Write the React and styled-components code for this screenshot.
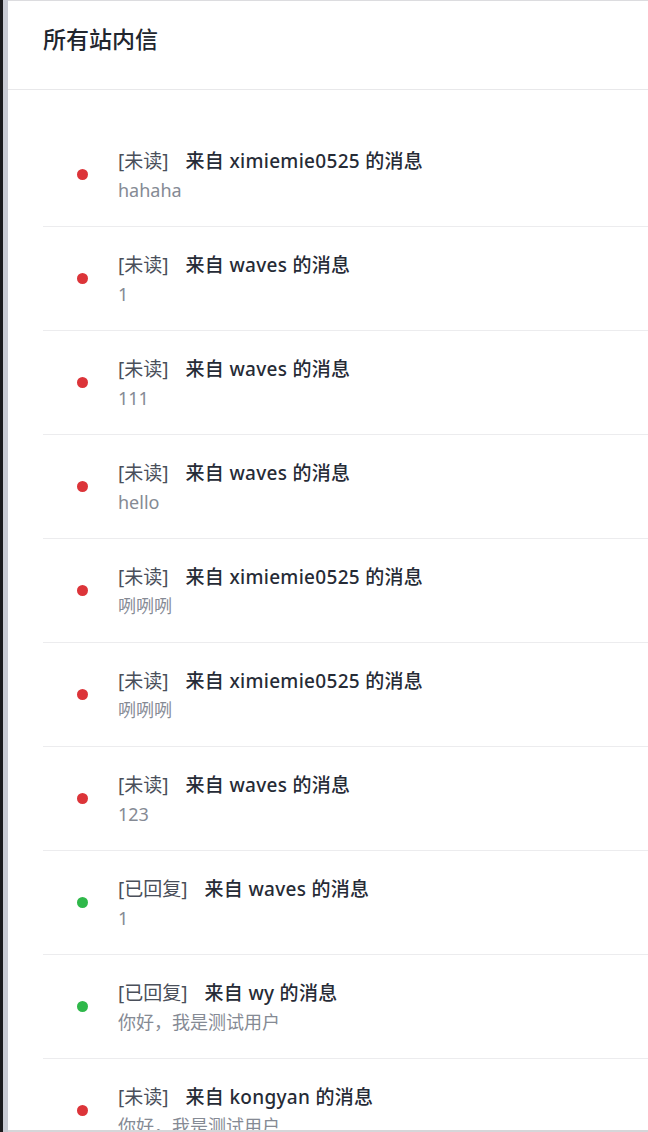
import React from 'react';
import styled, { createGlobalStyle } from 'styled-components';

const GlobalStyle = createGlobalStyle`
  html, body {
    margin: 0;
    padding: 0;
    height: 100%;
    background: #fff;
  }
  body {
    font-family: "Noto Sans", "Noto Sans CJK SC", sans-serif;
    overflow: hidden;
  }
`;

const Page = styled.div`
  display: flex;
  height: 100vh;
  overflow: hidden;
`;

// the dark edge of the window behind the drawer
const BackEdge = styled.div`
  width: 3px;
  flex-shrink: 0;
  background: #1b1b1d;
`;

const Shade = styled.div`
  width: 5px;
  flex-shrink: 0;
  background: #c9cbd3;
`;

const Drawer = styled.div`
  flex: 1;
  display: flex;
  flex-direction: column;
  background: #fff;
  border-top: 1px solid #dcdcdf;
  border-bottom: 2px solid #d6d6d9;
  overflow: hidden;
`;

const Header = styled.div`
  height: 89px;
  box-sizing: border-box;
  flex-shrink: 0;
  display: flex;
  align-items: center;
  padding: 0 35px 14px;
  border-bottom: 1px solid #e8e8ea;

  h2 {
    margin: 0;
    font-size: 23px;
    font-weight: 500;
    color: #22262e;
  }
`;

const List = styled.ul`
  list-style: none;
  margin: 0;
  padding: 33px 0 0 35px;
  overflow: hidden;
`;

const Item = styled.li`
  display: flex;
  align-items: center;
  height: 103px;
  padding-left: 34px;
  border-bottom: 1px solid #ececee;
`;

const Dot = styled.span`
  width: 11px;
  height: 11px;
  border-radius: 50%;
  flex-shrink: 0;
  margin: 0 30px 0 0;
  background: ${({ $replied }) => ($replied ? '#2fb84a' : '#dc3439')};
`;

const Body = styled.div`
  display: flex;
  flex-direction: column;
  margin-top: 2px;
`;

const Title = styled.div`
  font-size: 19px;
  line-height: 28px;
  letter-spacing: 0.3px;
  color: #262b36;
  font-weight: 500;

  .status {
    color: #4a4f5a;
    font-weight: 400;
    letter-spacing: 0;
    margin-right: 17px;
  }
`;

const Preview = styled.div`
  font-size: 18px;
  line-height: 28px;
  margin-top: 1px;
  color: #858a94;
`;

const messages = [
  { status: '未读', from: 'ximiemie0525', text: 'hahaha' },
  { status: '未读', from: 'waves', text: '1' },
  { status: '未读', from: 'waves', text: '111' },
  { status: '未读', from: 'waves', text: 'hello' },
  { status: '未读', from: 'ximiemie0525', text: '咧咧咧' },
  { status: '未读', from: 'ximiemie0525', text: '咧咧咧' },
  { status: '未读', from: 'waves', text: '123' },
  { status: '已回复', from: 'waves', text: '1' },
  { status: '已回复', from: 'wy', text: '你好，我是测试用户' },
  { status: '未读', from: 'kongyan', text: '你好，我是测试用户' },
];

export default function App() {
  return (
    <>
      <GlobalStyle />
      <Page>
        <BackEdge />
        <Shade />
        <Drawer>
          <Header>
            <h2>所有站内信</h2>
          </Header>
          <List>
            {messages.map((m, i) => (
              <Item key={i}>
                <Dot $replied={m.status === '已回复'} />
                <Body>
                  <Title>
                    <span className="status">[{m.status}]</span>
                    来自 {m.from} 的消息
                  </Title>
                  <Preview>{m.text}</Preview>
                </Body>
              </Item>
            ))}
          </List>
        </Drawer>
      </Page>
    </>
  );
}
